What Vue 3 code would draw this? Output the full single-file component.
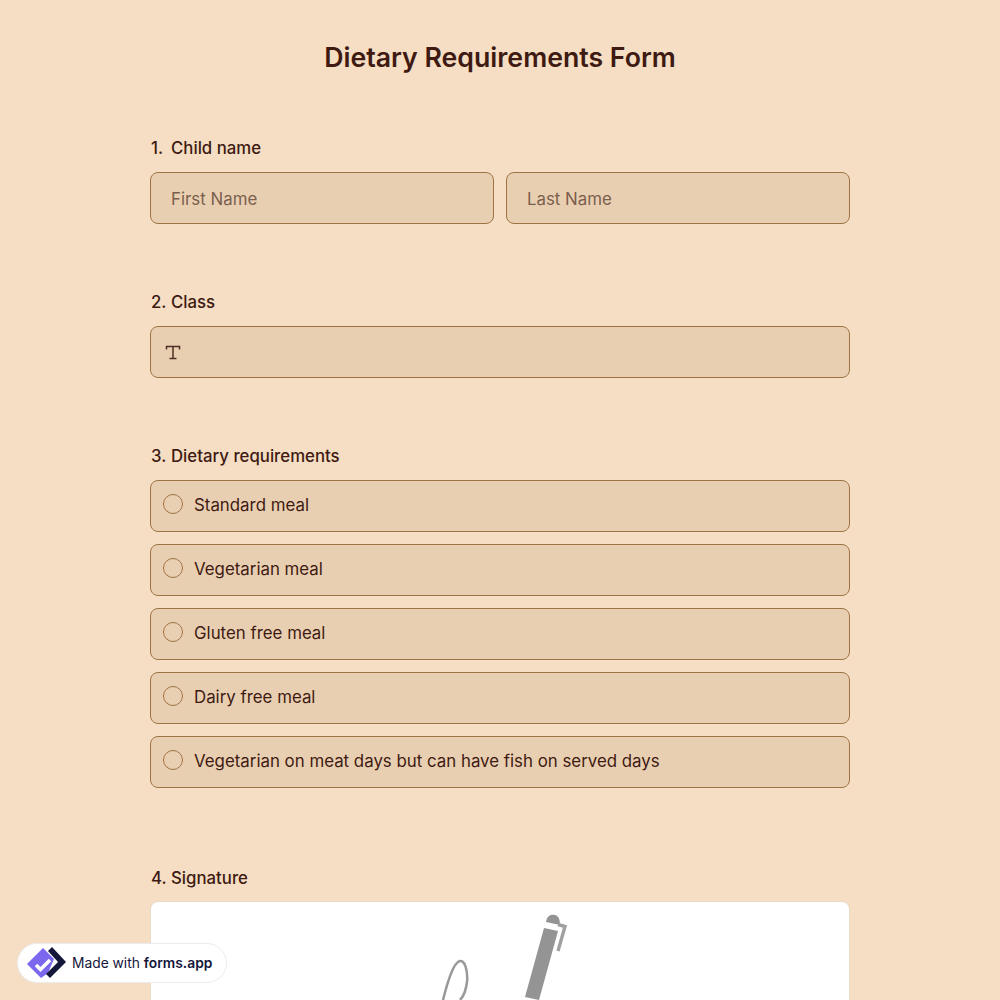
<script setup>
const options = [
  'Standard meal',
  'Vegetarian meal',
  'Gluten free meal',
  'Dairy free meal',
  'Vegetarian on meat days but can have fish on served days',
]
</script>

<template>
  <div class="page">
    <h1 class="title">Dietary Requirements Form</h1>

    <section class="question">
      <div class="label"><span class="num">1.</span>Child name</div>
      <div class="name-row">
        <div class="field placeholder">First Name</div>
        <div class="field placeholder">Last Name</div>
      </div>
    </section>

    <section class="question">
      <div class="label"><span class="num">2.</span>Class</div>
      <div class="field class-field">
        <svg class="t-icon" width="16" height="16" viewBox="0 0 16 16">
          <path d="M1.500 4.500 V1.500 H14.500 V4.500 M8 1.500 V13.500 M4.500 13.500 H11.500" fill="none" stroke="#4f2f25" stroke-width="1.500" />
        </svg>
      </div>
    </section>

    <section class="question options-q">
      <div class="label"><span class="num">3.</span>Dietary requirements</div>
      <div class="options">
        <div v-for="o in options" :key="o" class="field option">
          <span class="radio"></span>
          <span>{{ o }}</span>
        </div>
      </div>
    </section>

    <section class="question signature-q">
      <div class="label sig-label"><span class="num">4.</span>Signature</div>
      <div class="signature">
        <svg class="sig-art" width="170" height="100" viewBox="0 0 170 100">
          <path d="M23 100 C27 84 32 66 38 62 C45 57 48 72 47 82 C46 90 44 96 40 100" fill="none" stroke="#999999" stroke-width="2.500" />
          <path d="M126 22 C127 15 132 14 135 15 C139 16 140 20 140 25 Z" fill="#949494" />
          <path d="M124 28 L138 31 L119 100 L105 97 Z" fill="#949494" />
          <path d="M138 24.500 L145 26.500 L138 51" fill="none" stroke="#a0a0a0" stroke-width="3.400" />
        </svg>
      </div>
    </section>

    <div class="badge">
      <svg class="logo" width="40" height="32" viewBox="0 0 40 32">
        <path d="M0 17 L16 1 L27 12 L14 31 Z" fill="#7b68ee" />
        <path d="M15 24 L27 12 L21 26 L14 31 Z" fill="#7b68ee" />
        <path d="M9 18 L13.500 22.500 L23 13" fill="none" stroke="#fff" stroke-width="3.600" />
        <path d="M21 4 L25 0 L39 15 L23 31 L19 27 L31 15 Z" fill="#14163a" />
      </svg>
      <span class="badge-text">Made with <b>forms.app</b></span>
    </div>
  </div>
</template>

<style scoped>
.page {
  width: 700px;
  margin: 0 auto;
  font-family: Inter, "Liberation Sans", sans-serif;
  color: #3e1a12;
}
.title {
  margin: 0;
  padding-top: 40px;
  height: 95px;
  box-sizing: border-box;
  font-size: 26.700px;
  line-height: 34px;
  font-weight: 600;
  text-align: center;
}
.question {
  padding-top: 40px;
  padding-bottom: 25px;
}
.options-q { padding-bottom: 37px; }
.label {
  display: flex;
  padding-left: 1px;
  font-size: 16.800px;
  font-weight: 500;
  line-height: 26px;
  height: 24px;
  margin-bottom: 13px;
}
.sig-label { margin-bottom: 12px; }
.num { width: 20px; }
.name-row {
  display: grid;
  grid-template-columns: 1fr 1fr;
  gap: 12px;
}
.field {
  box-sizing: border-box;
  height: 52px;
  background: #e9cfb1;
  border: 1px solid #9f7444;
  border-radius: 8px;
  display: flex;
  align-items: center;
  font-size: 16.850px;
}
.placeholder {
  padding-left: 20px;
  padding-top: 1px;
  color: #7a5f4e;
}
.class-field {
  padding-left: 14px;
  padding-top: 2px;
}
.t-icon { display: block; }
.options {
  display: flex;
  flex-direction: column;
  gap: 12px;
}
.option {
  padding-left: 12px;
  padding-bottom: 2px;
  gap: 11px;
}
.radio {
  box-sizing: border-box;
  width: 20px;
  height: 20px;
  margin-top: -2px;
  border: 1px solid #9f7444;
  border-radius: 50%;
}
.signature-q { padding-bottom: 0; }
.signature {
  height: 300px;
  background: #fff;
  border-radius: 8px 8px 0 0;
  border: 1px solid #ead9c4;
  box-sizing: border-box;
  display: flex;
  justify-content: center;
  align-items: flex-start;
}
.sig-art {
  margin-left: 10px;
  margin-top: -2px;
}
.badge {
  position: fixed;
  left: 17px;
  top: 943px;
  box-sizing: border-box;
  width: 210px;
  height: 40px;
  background: #fff;
  border: 1px solid #ebebef;
  border-radius: 20px;
  display: flex;
  align-items: center;
  padding-left: 9px;
  gap: 5px;
  font-size: 13.800px;
  color: #14163a;
}
.badge-text b { font-weight: 600; }
</style>

<style>
html, body {
  margin: 0;
  background: #f5dec3;
  overflow: hidden;
}
</style>
